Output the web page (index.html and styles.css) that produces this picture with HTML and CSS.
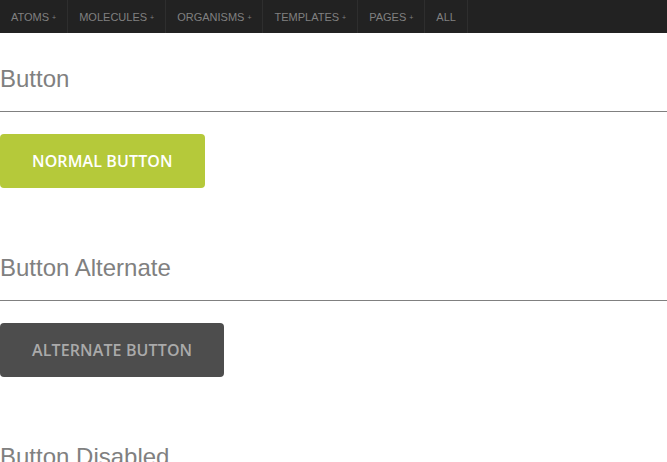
FILE: index.html
```html
<!DOCTYPE html>
<html>
<head>
<meta charset="utf-8">
<link rel="stylesheet" href="styles.css">
</head>
<body>
<nav class="nav">
  <a class="nav-item">Atoms<span class="plus">+</span></a>
  <a class="nav-item">Molecules<span class="plus">+</span></a>
  <a class="nav-item">Organisms<span class="plus">+</span></a>
  <a class="nav-item">Templates<span class="plus">+</span></a>
  <a class="nav-item">Pages<span class="plus">+</span></a>
  <a class="nav-item">All</a>
</nav>
<main class="content">
  <section class="pattern">
    <h2 class="pattern-title">Button</h2>
    <a class="btn">Normal Button</a>
  </section>
  <section class="pattern">
    <h2 class="pattern-title">Button Alternate</h2>
    <a class="btn btn-alt">Alternate Button</a>
  </section>
  <section class="pattern">
    <h2 class="pattern-title">Button Disabled</h2>
    <a class="btn btn-disabled">Disabled Button</a>
  </section>
</main>
</body>
</html>
```
FILE: styles.css
```css
html, body {
  margin: 0;
  padding: 0;
  background: #fff;
}
body {
  font-family: "Liberation Sans", Arial, sans-serif;
  overflow: hidden;
  height: 462px;
}
.nav {
  display: flex;
  height: 33px;
  background: #222;
}
.nav-item {
  display: flex;
  align-items: center;
  padding: 0 11px;
  border-right: 1px solid #2e2e2e;
  font-size: 11px;
  text-transform: uppercase;
  color: #808080;
}
.plus {
  font-size: 7px;
  margin-left: 3px;
  margin-top: 2px;
}
.content {
  display: flex;
  flex-direction: column;
}
.pattern {
  display: flex;
  flex-direction: column;
  align-items: flex-start;
  padding-top: 31px;
  padding-bottom: 34px;
}
.pattern-title {
  align-self: stretch;
  margin: 0 0 22px;
  padding-bottom: 18px;
  border-bottom: 1px solid #808080;
  font-size: 24px;
  line-height: 29px;
  font-weight: normal;
  color: #808080;
}
.btn {
  display: block;
  padding: 0 32px;
  height: 54px;
  line-height: 54px;
  border-radius: 4px;
  background: #b5c93a;
  color: #fff;
  font-family: "Open Sans", sans-serif;
  font-weight: 600;
  font-size: 16px;
  letter-spacing: 0.12px;
  text-transform: uppercase;
}
.btn-alt {
  background: #4d4d4d;
  color: #aaa;
}
.btn-disabled {
  background: #ddd;
  color: #999;
}
```
